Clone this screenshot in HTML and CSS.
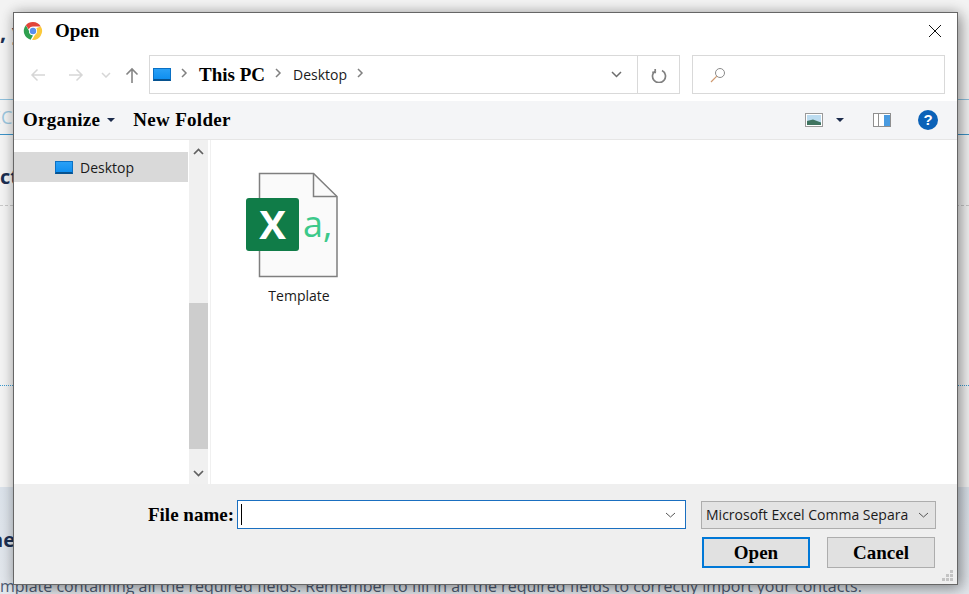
FILE: index.html
```html
<!DOCTYPE html>
<html lang="en">
<head>
    <meta charset="UTF-8">
    <title>Open</title>
    <link rel="stylesheet" href="styles.css">
</head>
<body>
    <!-- page behind the dialog -->
    <div class="page">
        <div class="page-heading">, y</div>
        <div class="page-tab"><span>EC</span></div>
        <div class="page-title">ct</div>
        <div class="page-dash"></div>
        <div class="page-dots"></div>
        <div class="page-lower">
            <div class="page-subtitle">he</div>
            <div class="page-text">mplate containing all the required fields. Remember to fill in all the required fields to correctly import your contacts.</div>
        </div>
    </div>

    <div class="dialog">
        <div class="title-bar">
            <svg class="chrome" width="20" height="20" viewBox="0 0 20 20">
                <path d="M10 1a9 9 0 0 1 7.8 4.5H10a4.500 4.500 0 0 0-4.200 3L2.800 4.300A9 9 0 0 1 10 1z" fill="#e2453a"/>
                <path d="M2.800 4.300l3.400 5.900A4.500 4.500 0 0 0 10 14.500L7.600 18.700A9 9 0 0 1 2.800 4.300z" fill="#2fa04f"/>
                <path d="M17.800 5.500A9 9 0 0 1 9 19l3.900-6.700a4.500 4.500 0 0 0 .2-5z" fill="#fbc93a"/>
                <circle cx="10" cy="10" r="4" fill="#fff"/>
                <circle cx="10" cy="10" r="3.200" fill="#5a8fec"/>
            </svg>
            <span class="title-text">Open</span>
            <svg class="close" width="14" height="14" viewBox="0 0 14 14"><path d="M1 1l12 12M13 1L1 13" stroke="#111" stroke-width="1" fill="none"/></svg>
        </div>

        <div class="nav-row">
            <svg class="nav-icon" width="16" height="14" viewBox="0 0 16 14"><path d="M15 7H2M7.500 1.500L2 7l5.500 5.500" stroke="#d6d6d6" stroke-width="1.500" fill="none"/></svg>
            <svg class="nav-icon nav-forward" width="16" height="14" viewBox="0 0 16 14"><path d="M1 7h13M8.500 1.500L14 7l-5.500 5.500" stroke="#d6d6d6" stroke-width="1.500" fill="none"/></svg>
            <svg class="nav-icon nav-recent" width="10" height="6" viewBox="0 0 10 6"><path d="M1 1l4 4 4-4" stroke="#d6d6d6" stroke-width="1.500" fill="none"/></svg>
            <svg class="nav-icon nav-up" width="14" height="16" viewBox="0 0 14 16"><path d="M7 16V2M1.500 7.500L7 2l5.500 5.500" stroke="#858585" stroke-width="1.600" fill="none"/></svg>
            <div class="address">
                <span class="monitor"></span>
                <svg class="crumb-sep" width="7" height="10" viewBox="0 0 7 10"><path d="M1 1l4 4-4 4" stroke="#808080" stroke-width="1.500" fill="none"/></svg>
                <span class="crumb-strong">This PC</span>
                <svg class="crumb-sep" width="7" height="10" viewBox="0 0 7 10"><path d="M1 1l4 4-4 4" stroke="#808080" stroke-width="1.500" fill="none"/></svg>
                <span class="crumb">Desktop</span>
                <svg class="crumb-sep" width="7" height="10" viewBox="0 0 7 10"><path d="M1 1l4 4-4 4" stroke="#808080" stroke-width="1.500" fill="none"/></svg>
                <span class="address-fill"></span>
                <svg class="address-drop" width="11" height="7" viewBox="0 0 11 7"><path d="M1 1l4.500 4.500L10 1" stroke="#6d6d6d" stroke-width="1.500" fill="none"/></svg>
                <span class="refresh">
                    <svg width="16" height="16" viewBox="0 0 16 16"><path d="M5 2.400A6.500 6.500 0 1 0 11 2.400M4.200 1v3.400h-3" stroke="#808080" stroke-width="1.700" fill="none" transform="translate(0 1)"/></svg>
                </span>
            </div>
            <div class="search">
                <svg width="16" height="16" viewBox="0 0 16 16">
                    <circle cx="10" cy="6" r="4.500" stroke="#8a8a8a" stroke-width="1" fill="none"/>
                    <path d="M6.800 9.200L1 15" stroke="#d09a70" stroke-width="1.200"/>
                </svg>
            </div>
        </div>

        <div class="toolbar">
            <span class="tool-btn">Organize</span>
            <span class="caret caret-organize"></span>
            <span class="tool-btn tool-new">New Folder</span>
            <span class="toolbar-fill"></span>
            <svg class="view-icon" width="18" height="14" viewBox="0 0 18 14">
                <rect x="0.500" y="0.500" width="17" height="13" fill="#fff" stroke="#9a9a9a"/>
                <rect x="2" y="2" width="14" height="10" fill="#bcdcf0"/>
                <path d="M2 8l6-1.500 8 3V12H2z" fill="#3f7460"/>
            </svg>
            <span class="caret caret-view"></span>
            <svg class="pane-icon" width="18" height="14" viewBox="0 0 18 14">
                <rect x="0.500" y="0.500" width="17" height="13" fill="#fff" stroke="#8f8f8f"/>
                <rect x="11" y="2" width="6" height="11" fill="#4a9be0"/>
                <rect x="5" y="1" width="1" height="12" fill="#8f8f8f"/>
            </svg>
            <span class="help">?</span>
        </div>

        <div class="main">
            <div class="side">
                <div class="tree">
                    <div class="tree-item"><span class="monitor"></span><span>Desktop</span></div>
                </div>
                <div class="scrollbar">
                    <svg class="scroll-up" width="11" height="7" viewBox="0 0 11 7"><path d="M1 6l4.500-4.500L10 6" stroke="#606060" stroke-width="1.700" fill="none"/></svg>
                    <div class="scroll-thumb"></div>
                    <svg class="scroll-down" width="11" height="7" viewBox="0 0 11 7"><path d="M1 1l4.500 4.500L10 1" stroke="#606060" stroke-width="1.700" fill="none"/></svg>
                </div>
            </div>
            <div class="files">
                <div class="file">
                    <svg width="92" height="106" viewBox="0 0 92 106">
                        <path d="M13.500 1.500H67.500L91 24.500V104.500H13.500z" fill="#fafafa" stroke="#7f7f7f" stroke-width="1.500"/>
                        <path d="M67.500 1.500V24.500H91" fill="none" stroke="#7f7f7f" stroke-width="1.500"/>
                        <rect x="0" y="26" width="53" height="53" rx="3" fill="#107c48"/>
                        <text class="file-x" x="26.500" y="67" text-anchor="middle">X</text>
                        <text class="file-a" x="57" y="65">a,</text>
                    </svg>
                    <div class="file-name">Template</div>
                </div>
            </div>
        </div>

        <div class="footer">
            <div class="footer-row">
                <span class="field-label">File name:</span>
                <div class="name-input">
                    <span class="cursor"></span>
                    <svg width="11" height="6" viewBox="0 0 11 6"><path d="M1 1l4.500 4L10 1" stroke="#555" stroke-width="1" fill="none"/></svg>
                </div>
                <div class="type-select">
                    <span>Microsoft Excel Comma Separa</span>
                    <svg width="11" height="6" viewBox="0 0 11 6"><path d="M1 1l4.500 4L10 1" stroke="#555" stroke-width="1" fill="none"/></svg>
                </div>
            </div>
            <div class="button-row">
                <button class="btn btn-default">Open</button>
                <button class="btn">Cancel</button>
            </div>
            <svg class="grip" width="12" height="12" viewBox="0 0 12 12" fill="#c4c4c4">
                <rect x="8" y="0" width="3" height="3"/>
                <rect x="4" y="4" width="3" height="3"/><rect x="8" y="4" width="3" height="3"/>
                <rect x="0" y="8" width="3" height="3"/><rect x="4" y="8" width="3" height="3"/><rect x="8" y="8" width="3" height="3"/>
            </svg>
        </div>
    </div>
</body>
</html>
```

FILE: styles.css
```css
* {
    margin: 0;
    padding: 0;
    box-sizing: border-box;
}

body {
    width: 969px;
    height: 594px;
    overflow: hidden;
    background: #fff;
    font-family: 'Open Sans', 'Liberation Sans', sans-serif;
    position: relative;
}

/* page behind the dialog */
.page {
    width: 969px;
    height: 594px;
    display: flex;
    flex-direction: column;
    background: #f3f3f3;
    overflow: hidden;
    color: #1c2f52;
}

.page-heading {
    height: 99px;
    padding-top: 18px;
    font-size: 22px;
    font-weight: 700;
    line-height: 26px;
}

.page-tab {
    height: 36px;
    border-top: 1px solid #8fc1dd;
    border-bottom: 1px solid #3d93c8;
    color: #9cc7df;
    font-size: 18px;
    line-height: 34px;
    margin-left: -9px;
    padding-left: 0;
}

.page-title {
    height: 70px;
    padding-top: 29px;
    font-size: 20px;
    font-weight: 700;
    line-height: 26px;
}

.page-dash {
    height: 180px;
    border-top: 1px dashed #c8c8c8;
}

.page-dots {
    height: 102px;
    border-top: 1px dotted #3d9bd0;
}

.page-lower {
    flex: 1;
    background: linear-gradient(180deg, #dbe2ea, #e3e7ec);
    overflow: hidden;
}

.page-subtitle {
    height: 70px;
    padding-top: 40px;
    margin-left: -10px;
    font-size: 20px;
    font-weight: 700;
    line-height: 26px;
}

.page-text {
    height: 24px;
    margin-top: 17px;
    white-space: nowrap;
    font-size: 16px;
    line-height: 24px;
    color: #4e5b72;
}

/* dialog */
.dialog {
    position: absolute;
    left: 13px;
    top: 12px;
    width: 945px;
    height: 573px;
    display: flex;
    flex-direction: column;
    background: #fff;
    border: 1px solid #666;
    box-shadow: 4px 4px 14px rgba(0, 0, 0, 0.3), 0 0 12px rgba(0, 0, 0, 0.2);
}

.title-bar {
    height: 42px;
    display: flex;
    align-items: center;
    padding: 0 15px 6px 9px;
    flex-shrink: 0;
}

.title-text,
.crumb-strong,
.tool-btn,
.field-label,
.btn {
    font-family: 'Liberation Serif', serif;
    font-weight: 700;
    font-size: 19px;
    color: #000;
}

.title-text {
    margin-left: 12px;
    flex: 1;
}

.nav-row {
    height: 39px;
    display: flex;
    align-items: center;
    padding-left: 16px;
    flex-shrink: 0;
}

.nav-forward {
    margin-left: 22px;
}

.nav-recent {
    margin-left: 17px;
}

.nav-up {
    margin-left: 14px;
}

.address {
    width: 531px;
    height: 39px;
    margin-left: 10px;
    display: flex;
    align-items: center;
    border: 1px solid #d9d9d9;
    padding-left: 3px;
}

.monitor {
    width: 18px;
    height: 13px;
    display: inline-block;
    flex-shrink: 0;
    background: linear-gradient(180deg, #29a0f6, #0f8ff0);
    border: 1px solid #0a70c4;
    border-bottom: 2px solid #07528f;
}

.crumb-sep {
    margin-left: 10px;
    margin-bottom: 3px;
}

.crumb-strong {
    margin-left: 11px;
}

.crumb {
    margin-left: 11px;
    font-size: 14px;
    color: #1a1a1a;
}

.address-fill {
    flex: 1;
}

.address-drop {
    margin-right: 15px;
}

.refresh {
    width: 42px;
    height: 37px;
    display: flex;
    align-items: center;
    justify-content: center;
    border-left: 1px solid #d9d9d9;
}

.search {
    width: 253px;
    height: 39px;
    margin-left: 12px;
    display: flex;
    align-items: center;
    padding-left: 17px;
    border: 1px solid #d9d9d9;
}

.toolbar {
    height: 39px;
    margin-top: 7px;
    display: flex;
    align-items: center;
    padding: 0 19px 0 9px;
    background: #f4f5f7;
    border-bottom: 1px solid #e6e6e6;
    flex-shrink: 0;
}

.tool-btn {
    letter-spacing: 0.3px;
}

.caret {
    width: 0;
    height: 0;
    border-left: 4px solid transparent;
    border-right: 4px solid transparent;
    border-top: 4px solid #1b2b4b;
}

.caret-organize {
    margin-left: 7px;
}

.tool-new {
    margin-left: 18px;
}

.toolbar-fill {
    flex: 1;
}

.caret-view {
    margin-left: 13px;
}

.pane-icon {
    margin-left: 29px;
}

.help {
    width: 20px;
    height: 20px;
    margin-left: 27px;
    border-radius: 50%;
    background: #0b62b8;
    color: #fff;
    font-family: 'Liberation Sans', sans-serif;
    font-weight: 700;
    font-size: 15px;
    line-height: 20px;
    text-align: center;
}

.main {
    flex: 1;
    display: flex;
    min-height: 0;
}

.side {
    width: 197px;
    display: flex;
    border-right: 1px solid #f0f0f0;
    flex-shrink: 0;
}

.tree {
    width: 174px;
    padding-top: 12px;
}

.tree-item {
    height: 30px;
    display: flex;
    align-items: center;
    gap: 7px;
    padding-left: 41px;
    background: #d9d9d9;
    font-size: 14px;
    color: #1a1a1a;
}

.scrollbar {
    width: 19px;
    margin-left: 1px;
    position: relative;
    background: #f0f0f0;
}

.scroll-up {
    position: absolute;
    left: 4px;
    top: 8px;
}

.scroll-down {
    position: absolute;
    left: 4px;
    bottom: 7px;
}

.scroll-thumb {
    position: absolute;
    left: 0;
    top: 163px;
    width: 19px;
    height: 146px;
    background: #cdcdcd;
}

.files {
    flex: 1;
    padding: 32px 0 0 35px;
}

.file {
    width: 92px;
    display: flex;
    flex-direction: column;
    align-items: center;
}

.file svg {
    flex-shrink: 0;
}

.file-x {
    font-family: 'Open Sans', sans-serif;
    font-weight: 700;
    font-size: 40px;
    fill: #fff;
}

.file-a {
    font-family: 'Open Sans', sans-serif;
    font-size: 36px;
    fill: #3cc98a;
}

.file-name {
    margin-top: 8px;
    margin-left: 14px;
    font-size: 14px;
    line-height: 20px;
    color: #1a1a1a;
}

.footer {
    height: 100px;
    position: relative;
    background: #efefef;
    flex-shrink: 0;
}

.footer-row {
    display: flex;
    align-items: center;
    justify-content: flex-end;
    padding: 16px 21px 0 0;
}

.name-input {
    width: 449px;
    height: 29px;
    margin-left: 3px;
    display: flex;
    align-items: center;
    justify-content: space-between;
    padding: 0 9px 0 3px;
    background: #fff;
    border: 1px solid #1a6fc0;
}

.cursor {
    width: 1px;
    height: 21px;
    background: #000;
}

.type-select {
    width: 235px;
    height: 28px;
    margin-left: 15px;
    display: flex;
    align-items: center;
    justify-content: space-between;
    padding: 0 6px 0 4px;
    background: #e3e3e3;
    border: 1px solid #adadad;
    font-size: 14px;
    color: #1a1a1a;
    white-space: nowrap;
}

.button-row {
    display: flex;
    justify-content: flex-end;
    gap: 17px;
    padding: 8px 22px 0 0;
}

.btn {
    width: 108px;
    height: 31px;
    background: #e1e1e1;
    border: 1px solid #adadad;
    line-height: 27px;
}

.btn-default {
    border: 2px solid #0078d7;
}

.grip {
    position: absolute;
    right: 3px;
    bottom: 2px;
}
```
